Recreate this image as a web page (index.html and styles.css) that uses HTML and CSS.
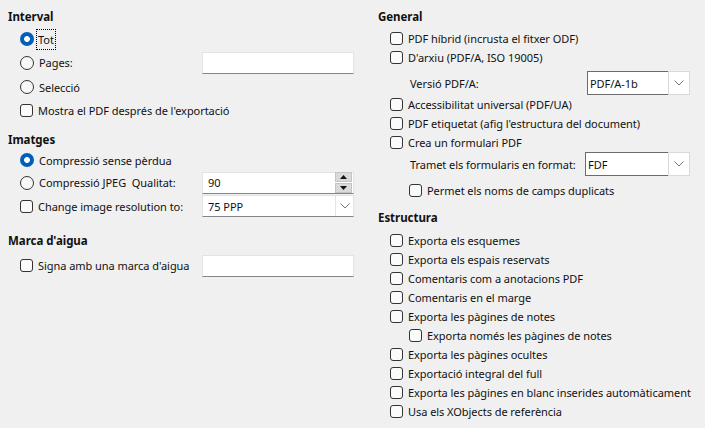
FILE: index.html
```html
<!DOCTYPE html>
<html lang="ca">
<head>
    <meta charset="UTF-8">
    <title>Exporta a PDF - General</title>
    <link rel="stylesheet" href="styles.css">
</head>
<body>
    <div id="page">
        <div class="column left">
            <div class="heading">Interval</div>
            <div class="row r-tot">
                <span class="radio checked"></span>
                <span class="label focus">Tot</span>
            </div>
            <div class="row r-field">
                <span class="radio"></span>
                <span class="label">Pages:</span>
                <span class="entry"></span>
            </div>
            <div class="row r-sel">
                <span class="radio"></span>
                <span class="label">Selecció</span>
            </div>
            <div class="row r-show">
                <span class="check"></span>
                <span class="label">Mostra el PDF després de l'exportació</span>
            </div>

            <div class="heading h-img">Imatges</div>
            <div class="row r-lossless">
                <span class="radio checked"></span>
                <span class="label">Compressió sense pèrdua</span>
            </div>
            <div class="row r-jpeg">
                <span class="radio"></span>
                <span class="label">Compressió JPEG&nbsp; Qualitat:</span>
                <span class="entry spin">
                    <span class="value">90</span>
                    <span class="spin-buttons">
                        <span class="spin-btn"><svg width="7" height="4" viewBox="0 0 7 4"><path d="M3.5 0 L7 4 L0 4 Z" fill="#111"/></svg></span>
                        <span class="spin-btn"><svg width="7" height="4" viewBox="0 0 7 4"><path d="M0 0 L7 0 L3.5 4 Z" fill="#111"/></svg></span>
                    </span>
                </span>
            </div>
            <div class="row r-res">
                <span class="check"></span>
                <span class="label">Change image resolution to:</span>
                <span class="entry combo">
                    <span class="value">75 PPP</span>
                    <span class="drop"><svg width="10" height="6" viewBox="0 0 10 6"><path d="M0.5 0.5 L5 5 L9.5 0.5" fill="none" stroke="#777" stroke-width="1"/></svg></span>
                </span>
            </div>

            <div class="heading h-mark">Marca d'aigua</div>
            <div class="row r-field r-sign">
                <span class="check"></span>
                <span class="label">Signa amb una marca d'aigua</span>
                <span class="entry"></span>
            </div>
        </div>

        <div class="column right">
            <div class="heading">General</div>
            <div class="list l-general">
                <div class="row small">
                    <span class="check"></span>
                    <span class="label">PDF híbrid (incrusta el fitxer ODF)</span>
                </div>
                <div class="row small">
                    <span class="check"></span>
                    <span class="label">D'arxiu (PDF/A, ISO 19005)</span>
                </div>
                <div class="row sub r-version">
                    <span class="label">Versió PDF/A:</span>
                    <span class="select v-pdfa">
                        <span class="value">PDF/A-1b</span>
                        <span class="drop"><svg width="10" height="6" viewBox="0 0 10 6"><path d="M0.5 0.5 L5 5 L9.5 0.5" fill="none" stroke="#777" stroke-width="1"/></svg></span>
                    </span>
                </div>
                <div class="row small">
                    <span class="check"></span>
                    <span class="label">Accessibilitat universal (PDF/UA)</span>
                </div>
                <div class="row small">
                    <span class="check"></span>
                    <span class="label">PDF etiquetat (afig l'estructura del document)</span>
                </div>
                <div class="row small">
                    <span class="check"></span>
                    <span class="label">Crea un formulari PDF</span>
                </div>
                <div class="row sub r-format">
                    <span class="label">Tramet els formularis en format:</span>
                    <span class="select v-fdf">
                        <span class="value">FDF</span>
                        <span class="drop"><svg width="10" height="6" viewBox="0 0 10 6"><path d="M0.5 0.5 L5 5 L9.5 0.5" fill="none" stroke="#777" stroke-width="1"/></svg></span>
                    </span>
                </div>
                <div class="row small sub r-dup">
                    <span class="check"></span>
                    <span class="label">Permet els noms de camps duplicats</span>
                </div>
            </div>

            <div class="heading h-struct">Estructura</div>
            <div class="list l-struct">
                <div class="row small"><span class="check"></span><span class="label">Exporta els esquemes</span></div>
                <div class="row small"><span class="check"></span><span class="label">Exporta els espais reservats</span></div>
                <div class="row small"><span class="check"></span><span class="label">Comentaris com a anotacions PDF</span></div>
                <div class="row small"><span class="check"></span><span class="label">Comentaris en el marge</span></div>
                <div class="row small"><span class="check"></span><span class="label">Exporta les pàgines de notes</span></div>
                <div class="row small sub"><span class="check"></span><span class="label">Exporta només les pàgines de notes</span></div>
                <div class="row small"><span class="check"></span><span class="label">Exporta les pàgines ocultes</span></div>
                <div class="row small"><span class="check"></span><span class="label">Exportació integral del full</span></div>
                <div class="row small"><span class="check"></span><span class="label">Exporta les pàgines en blanc inserides automàticament</span></div>
                <div class="row small"><span class="check"></span><span class="label">Usa els XObjects de referència</span></div>
            </div>
        </div>
    </div>
</body>
</html>
```

FILE: styles.css
```css
html, body {
    margin: 0;
    height: 100%;
}

body {
    background: #f0f0f0;
    font-family: "Noto Sans", "DejaVu Sans", sans-serif;
    font-size: 11px;
    letter-spacing: -0.05px;
    color: #111;
}

#page {
    display: grid;
    grid-template-columns: 346px 327px;
    column-gap: 24px;
    padding: 8px 0 0 8px;
}

.heading {
    font-weight: bold;
    height: 18px;
    line-height: 18px;
    font-size: 11.5px;
}

.h-img { margin-top: 10px; }
.h-mark { margin-top: 14px; }
.h-struct { margin-top: 9px; }

.row {
    display: flex;
    align-items: center;
    height: 22px;
    padding-left: 12px;
}

.row .label {
    margin-left: 5px;
    white-space: nowrap;
}

.r-tot { margin-top: 2px; }
.r-field { height: 25px; }
.r-sel { height: 24px; }
.r-show { height: 22px; }
.r-jpeg { height: 23px; }
.r-res { height: 24px; }
.r-sign { margin-top: 3px; }

.radio {
    width: 12px;
    height: 12px;
    border: 1px solid #333;
    border-radius: 50%;
    background: #f7f7f7;
    flex: none;
}

.radio.checked {
    width: 14px;
    height: 14px;
    border: none;
    background: radial-gradient(circle, #fff 0 2.6px, #005fb8 3.2px);
}

.check {
    width: 11px;
    height: 11px;
    border: 1px solid #333;
    border-radius: 3px;
    background: #fbfbfb;
    flex: none;
}

.focus {
    outline: 1px dotted #000;
    outline-offset: 0;
    padding: 2px 1px;
}

.r-tot .label { margin-left: 3px; }

.entry {
    margin-left: auto;
    width: 150px;
    height: 20px;
    background: #fff;
    border: 1px solid #e3e3e3;
    border-bottom-color: #858585;
    display: flex;
    align-items: center;
}

.entry .value {
    padding-left: 5px;
    flex: 1;
}

.spin-buttons {
    display: flex;
    flex-direction: column;
    gap: 1px;
    margin-right: 1px;
}

.spin-btn {
    width: 15px;
    height: 8px;
    background: #dadada;
    border: 1px solid #c4c4c4;
    display: flex;
    align-items: center;
    justify-content: center;
}

.drop {
    width: 17px;
    align-self: stretch;
    border-left: 1px solid #e3e3e3;
    display: flex;
    align-items: center;
    justify-content: center;
}

.list .row.small {
    height: 19px;
}

.right .row { padding-left: 12px; }
.right .row.sub { padding-left: 32px; }
.right .row.small.sub { padding-left: 31px; }

.l-general { margin-top: 3px; }
.l-struct { margin-top: 4px; }

.r-version { height: 24px; margin-top: 4px; }
.r-format { height: 24px; }
.r-version .label,
.r-format .label { margin-left: 0; }
.list .row.small.r-dup { margin-top: 5px; }

.select {
    margin-left: auto;
    margin-right: 15px;
    height: 22px;
    display: flex;
    border: 1px solid #d9d9d9;
    background: #fff;
}

.select .value {
    flex: 1;
    border: 1px solid #6b6b6b;
    border-right: none;
    margin: -1px 0 -1px -1px;
    padding-left: 2px;
    display: flex;
    align-items: center;
}

.select .drop {
    width: 20px;
    border-left: 1px solid #d9d9d9;
}

.v-pdfa { width: 101px; }
.v-fdf { width: 103px; }
```
